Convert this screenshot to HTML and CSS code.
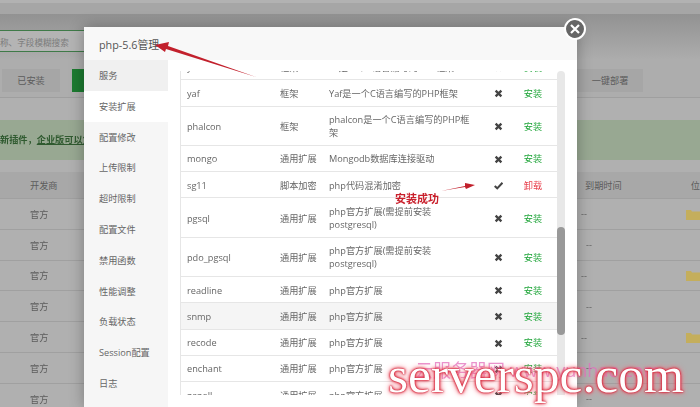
FILE: index.html
```html
<!DOCTYPE html>
<html lang="zh-CN">
<head>
    <meta charset="UTF-8">
    <meta name="viewport" content="width=device-width, initial-scale=1.0">
    <title>php-5.6管理</title>
    <link rel="stylesheet" href="styles.css">
</head>
<body>
    <svg class="defs" width="0" height="0">
        <symbol id="no" viewBox="0 0 10 10"><path d="M1.8 1.8 8.2 8.2M8.2 1.8 1.8 8.2" fill="none" stroke="#444" stroke-width="2.6"/></symbol>
        <symbol id="yes" viewBox="0 0 10 10"><path d="M.8 5.6 3.6 8.2 9.4 2" fill="none" stroke="#444" stroke-width="2.3"/></symbol>
        <symbol id="folder" viewBox="0 0 14 12"><path d="M0 2h5l1 1.500h8V12H0z" fill="#c4ae5c"/></symbol>
    </svg>

    <!-- 背景頁面 -->
    <div class="page">
        <div class="top-strip"></div>
        <div class="top-bar"></div>
        <div class="search-row"><div class="search">称、字段模糊搜索</div></div>
        <div class="tool-row">
            <span class="tool">已安装</span>
            <span class="tool tool-green"></span>
            <span class="tool tool-deploy">一键部署</span>
        </div>
        <div class="notice">新插件，<u>企业版可以免</u></div>
        <div class="grid-head">
            <span class="cell-dev">开发商</span>
            <span class="cell-date">到期时间</span>
            <span class="cell-pos">位</span>
        </div>
        <div class="grid-row"><span class="cell-dev">官方</span><span class="cell-date">--</span><svg class="cell-folder"><use href="#folder"/></svg></div>
        <div class="grid-row"><span class="cell-dev">官方</span><span class="cell-date">--</span></div>
        <div class="grid-row"><span class="cell-dev">官方</span><span class="cell-date">--</span><svg class="cell-folder"><use href="#folder"/></svg></div>
        <div class="grid-row"><span class="cell-dev">官方</span><span class="cell-date">--</span></div>
        <div class="grid-row"><span class="cell-dev">官方</span><span class="cell-date">--</span><svg class="cell-folder"><use href="#folder"/></svg></div>
        <div class="grid-row"><span class="cell-dev">官方</span><span class="cell-date">--</span></div>
        <div class="grid-row"><span class="cell-dev">官方</span><span class="cell-date">--</span></div>
    </div>

    <!-- 彈窗 -->
    <div class="modal">
        <div class="modal-title">php-5.6管理</div>
        <button class="modal-close" type="button">
            <svg width="12" height="12" viewBox="0 0 12 12"><path d="M2 2 10 10M10 2 2 10" fill="none" stroke="#fff" stroke-width="2.200"/></svg>
        </button>
        <div class="modal-body">
            <ul class="side">
                <li class="side-first">服务</li>
                <li class="side-active">安装扩展</li>
                <li>配置修改</li>
                <li>上传限制</li>
                <li>超时限制</li>
                <li>配置文件</li>
                <li>禁用函数</li>
                <li>性能调整</li>
                <li>负载状态</li>
                <li>Session配置</li>
                <li>日志</li>
            </ul>
            <div class="content">
                <div class="ext-box">
                    <table class="ext">
                        <colgroup><col class="c-name"><col class="c-type"><col class="c-desc"><col class="c-state"><col class="c-act"></colgroup>
                        <tr><td>yii</td><td>框架</td><td>Yii是一个C语言编写的PHP框架</td><td class="state"><svg><use href="#no"/></svg></td><td class="act">安装</td></tr>
                        <tr><td>yaf</td><td>框架</td><td>Yaf是一个C语言编写的PHP框架</td><td class="state"><svg><use href="#no"/></svg></td><td class="act">安装</td></tr>
                        <tr><td>phalcon</td><td>框架</td><td>phalcon是一个C语言编写的PHP框架</td><td class="state"><svg><use href="#no"/></svg></td><td class="act">安装</td></tr>
                        <tr><td>mongo</td><td>通用扩展</td><td>Mongodb数据库连接驱动</td><td class="state"><svg><use href="#no"/></svg></td><td class="act">安装</td></tr>
                        <tr><td>sg11</td><td>脚本加密</td><td>php代码混淆加密</td><td class="state"><svg><use href="#yes"/></svg></td><td class="act act-off">卸载</td></tr>
                        <tr><td>pgsql</td><td>通用扩展</td><td>php官方扩展(需提前安装postgresql)</td><td class="state"><svg><use href="#no"/></svg></td><td class="act">安装</td></tr>
                        <tr><td>pdo_pgsql</td><td>通用扩展</td><td>php官方扩展(需提前安装postgresql)</td><td class="state"><svg><use href="#no"/></svg></td><td class="act">安装</td></tr>
                        <tr><td>readline</td><td>通用扩展</td><td>php官方扩展</td><td class="state"><svg><use href="#no"/></svg></td><td class="act">安装</td></tr>
                        <tr class="hover"><td>snmp</td><td>通用扩展</td><td>php官方扩展</td><td class="state"><svg><use href="#no"/></svg></td><td class="act">安装</td></tr>
                        <tr><td>recode</td><td>通用扩展</td><td>php官方扩展</td><td class="state"><svg><use href="#no"/></svg></td><td class="act">安装</td></tr>
                        <tr><td>enchant</td><td>通用扩展</td><td>php官方扩展</td><td class="state"><svg><use href="#no"/></svg></td><td class="act">安装</td></tr>
                        <tr><td>pspell</td><td>通用扩展</td><td>php官方扩展</td><td class="state"><svg><use href="#no"/></svg></td><td class="act">安装</td></tr>
                    </table>
                </div>
                <div class="scroll"><div class="scroll-thumb"></div></div>
            </div>
        </div>
    </div>

    <!-- 標註 -->
    <svg class="marks" width="700" height="407" viewBox="0 0 700 407">
        <path d="M256 77 168 46 169 42 155 45 165 52 166 49z" fill="#c2202c"/>
        <path d="M441 191 465 186 465 183 475 185 466 189 465 187z" fill="#c2202c"/>
    </svg>
    <div class="mark-text">安装成功</div>

    <!-- 水印 -->
    <div class="wm-back">云服务器网 www.yunhao.com</div>
    <div class="wm-front">serverspc.com</div>
</body>
</html>
```

FILE: styles.css
```css
* {
    box-sizing: border-box;
}
html, body {
    margin: 0;
    height: 407px;
    overflow: hidden;
}
body {
    position: relative;
    font-family: "Open Sans", "Noto Sans CJK SC", sans-serif;
    font-size: 9.200px;
    color: #666;
    background: #b0b0b0;
    filter: blur(.35px);
}
.defs {
    position: absolute;
}

/* 背景頁面 */
.page {
    display: flex;
    flex-direction: column;
    height: 407px;
    color: #5c5c5c;
}
.page > div {
    flex: none;
}
.top-strip {
    height: 3px;
    background: #b2b2b2;
}
.top-bar {
    height: 11px;
    background: #a6a6a6;
}
.search-row {
    height: 46px;
    padding-top: 16px;
    background: linear-gradient(#929292, #adadad);
}
.search {
    width: 84px;
    height: 22px;
    line-height: 24px;
    font-size: 8.600px;
    color: #7b7b7b;
    background: #b4b4b4;
    border: 1px solid #3f7a48;
    border-left: none;
    border-right: none;
    overflow: hidden;
    white-space: nowrap;
}
.tool-row {
    display: flex;
    height: 47px;
    padding: 9px 0 0 2px;
    background: linear-gradient(#adadad 0, #adadad 37px, #9f9f9f 37px, #9f9f9f 38px, #b0b0b0 38px);
}
.tool {
    width: 58px;
    height: 23px;
    line-height: 23px;
    text-align: center;
    background: #a6a6a6;
}
.tool-green {
    width: 20px;
    margin-left: 12px;
    background: #1c7a30;
}
.tool-deploy {
    width: 66px;
    margin-left: 485px;
}
.notice {
    height: 40px;
    margin-top: 13px;
    line-height: 40px;
    margin-bottom: 12px;
    background: #98a892;
    color: #2f5a2f;
    font-weight: bold;
    white-space: nowrap;
    overflow: hidden;
}
.grid-head, .grid-row {
    position: relative;
    display: flex;
    align-items: center;
    border-bottom: 1px solid #a0a0a0;
}
.grid-head {
    height: 27px;
    background: #a8a8a8;
}
.grid-row {
    height: 30.800px;
}
.cell-dev {
    width: 586px;
    padding-left: 30px;
}
.cell-date {
    width: 106px;
}
.cell-folder {
    width: 14px;
    height: 12px;
    flex: none;
}

/* 彈窗 */
.modal {
    position: absolute;
    left: 84px;
    top: 27px;
    width: 493px;
    height: 380px;
    display: flex;
    flex-direction: column;
    background: #fff;
    box-shadow: 0 0 14px rgba(0, 0, 0, .3);
}
.modal-title {
    height: 33px;
    padding-left: 15px;
    font-size: 10.800px;
    line-height: 35px;
    color: #555;
    background: #f8f8f8;
}
.modal-close {
    position: absolute;
    right: -9px;
    top: -9px;
    display: flex;
    align-items: center;
    justify-content: center;
    width: 22px;
    height: 22px;
    padding: 0;
    border: 2px solid #fff;
    border-radius: 50%;
    background: #666;
}
.modal-body {
    flex: 1;
    display: flex;
    min-height: 0;
}
.side {
    width: 84px;
    margin: 0;
    padding: 0;
    list-style: none;
    background: #f6f6f6;
}
.side li {
    height: 30.800px;
    padding-left: 15px;
    line-height: 32px;
    white-space: nowrap;
}
.side-first {
    background: #f0f0f0;
}
.side .side-active {
    background: #fff;
}
.content {
    display: flex;
    align-items: flex-start;
    padding: 11px 0 0 12px;
}
.ext-box {
    width: 377px;
    height: 324px;
    overflow: hidden;
    border-left: 1px solid #e6e6e6;
}
.ext {
    width: 376px;
    margin-top: -17px;
    table-layout: fixed;
    border-collapse: separate;
    border-spacing: 0;
}
.c-name { width: 92px; }
.c-type { width: 49px; }
.c-desc { width: 159px; }
.c-state { width: 34px; }
.c-act { width: 42px; }
.ext td {
    padding: 6.650px 7px 5.650px;
    line-height: 13px;
    border-bottom: 1px solid #e6e6e6;
    vertical-align: middle;
}
.ext td:first-child {
    padding-left: 6px;
}
.ext td:nth-child(2) {
    padding-right: 0;
    white-space: nowrap;
}
.ext tr.hover td {
    background: #f5f5f5;
}
.ext .state {
    padding: 0;
    text-align: center;
}
.state svg {
    display: inline-block;
    width: 9px;
    height: 9px;
    vertical-align: middle;
}
.ext .act {
    padding: 1px 6px 0 0;
    text-align: center;
    color: #20a53a;
}
.ext .act-off {
    color: #e8414e;
}
.scroll {
    position: relative;
    width: 8px;
    height: 324px;
    background: #e8e8e8;
    border-radius: 4px 4px 0 0;
}
.scroll-thumb {
    position: absolute;
    left: 0;
    top: 156px;
    width: 8px;
    height: 108px;
    border-radius: 4px;
    background: #999;
}

/* 標註 */
.marks {
    position: absolute;
    left: 0;
    top: 0;
}
.mark-text {
    position: absolute;
    left: 395px;
    top: 192px;
    font-size: 11px;
    line-height: 14px;
    font-weight: bold;
    color: #c9202c;
    text-shadow: 0 0 2px #fff;
}

/* 水印 */
.wm-back {
    position: absolute;
    left: 415px;
    top: 358px;
    font-size: 18px;
    line-height: 24px;
    color: rgba(226, 110, 190, .75);
    white-space: nowrap;
}
.wm-front {
    position: absolute;
    left: 388px;
    top: 347px;
    font-family: "Liberation Serif", serif;
    font-size: 51.500px;
    line-height: 56px;
    color: #fff;
    white-space: nowrap;
    text-shadow: 0 0 1px #c8182e, 0 0 2px #d8283c, 0 0 3px #d8283c, 0 0 4px #e8505f, 0 0 7px #f08090;
}
```
